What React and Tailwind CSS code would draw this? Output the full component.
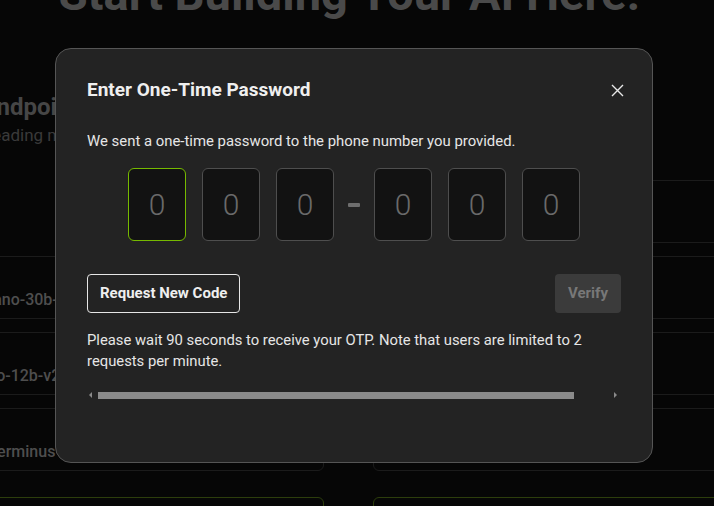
import React from 'react'

const digits = ['0', '0', '0', null, '0', '0', '0']

const OtpBox = ({ value, active }) => (
  <div
    className={`flex h-[73px] w-[58px] items-center justify-center rounded-[6px] border bg-[#121212] text-[30px] font-light text-[#6a6a6a] ${
      active ? 'border-[#76b900]' : 'border-[#4e4e4e]'
    }`}
  >
    {value}
  </div>
)

const BgCard = ({ label, green }) => (
  <div
    className={`h-[63px] whitespace-nowrap rounded-[6px] border pl-[6px] pt-[31px] text-[16px] font-medium leading-[24px] text-[#4e4e4e] ${
      green ? 'mt-[13px] border-[#2c3d0c]' : 'border-[#1b1b1b]'
    }`}
  >
    {label}
  </div>
)

export default function App() {
  return (
    <div
      className="relative h-[506px] w-[714px] overflow-hidden bg-[#060606]"
      style={{ fontFamily: 'Roboto, "Noto Sans", sans-serif' }}
    >
      {/* page behind the dialog */}
      <div className="flex flex-col">
        <h1 className="-mt-[34px] whitespace-nowrap pr-[16px] text-center text-[47px] font-bold leading-[56px] text-[#4a4a4a]">
          Start Building Your AI Here!
        </h1>
        <div className="-ml-[112px] mt-[70px] grid grid-cols-[436px_380px] gap-x-[49px]">
          <div className="flex flex-col">
            <div className="ml-[95px] whitespace-nowrap text-[24px] font-bold leading-[30px] text-[#464646]">
              Endpoints
            </div>
            <div className="ml-[95px] mt-[1px] whitespace-nowrap text-[17px] leading-[24px] text-[#3a3a3a]">
              Leading models
            </div>
            <div className="mt-[109px] flex flex-col gap-[13px]">
              <BgCard label="nemotron-3-nano-30b-a3b" />
              <BgCard label="nemotron-nano-12b-v2-vl" />
              <BgCard label="deepseek-v3-terminus" />
              <BgCard label="" green />
            </div>
          </div>
          <div className="flex flex-col pt-[88px]">
            <div className="flex flex-col gap-[13px]">
              <BgCard label="" />
              <BgCard label="" />
              <BgCard label="" />
              <BgCard label="" />
              <BgCard label="" green />
            </div>
          </div>
        </div>
      </div>

      {/* dialog */}
      <div className="absolute inset-0 pl-[55px] pt-[48px]">
        <div className="flex h-[415px] w-[598px] flex-col rounded-[16px] border border-[#555] bg-[#232323] px-[31px] pt-[29px]">
          <div className="flex items-center justify-between">
            <h2 className="text-[19px] font-bold leading-[24px] text-[#efefef]">Enter One-Time Password</h2>
            <svg width="13" height="13" viewBox="0 0 13 13" className="mr-[-3px]">
              <path d="M1 1L12 12M12 1L1 12" stroke="#e8e8e8" strokeWidth="1.4" />
            </svg>
          </div>

          <p className="mt-[29px] text-[14.9px] leading-[20px] text-[#e6e6e6]">
            We sent a one-time password to the phone number you provided.
          </p>

          <div className="mt-[17px] flex items-center justify-center gap-[16px]">
            {digits.map((d, i) =>
              d === null ? (
                <div key={i} className="mx-[-2px] h-[4px] w-[12px] rounded-[1px] bg-[#6e6e6e]" />
              ) : (
                <OtpBox key={i} value={d} active={i === 0} />
              )
            )}
          </div>

          <div className="mt-[33px] flex items-center justify-between">
            <button className="h-[39px] rounded-[4px] border border-[#e6e6e6] px-[12px] text-[15px] font-bold text-[#efefef]">
              Request New Code
            </button>
            <button className="h-[39px] rounded-[4px] bg-[#3b3b3b] px-[13px] text-[15px] font-bold text-[#787878]">
              Verify
            </button>
          </div>

          <p className="mt-[17px] text-[14.8px] leading-[21px] text-[#e6e6e6]">
            Please wait 90 seconds to receive your OTP. Note that users are limited to 2 requests per minute.
          </p>

          <div className="mt-[19px] flex h-[8px] items-center">
            <div className="ml-[2px] h-0 w-0 border-y-[3px] border-r-[3px] border-y-transparent border-r-[#8a8a8a]" />
            <div className="ml-[6px] h-[7px] w-[476px] bg-[#8b8b8b]" />
            <div className="ml-auto mr-[4px] h-0 w-0 border-y-[3px] border-l-[3px] border-y-transparent border-l-[#8a8a8a]" />
          </div>
        </div>
      </div>
    </div>
  )
}
